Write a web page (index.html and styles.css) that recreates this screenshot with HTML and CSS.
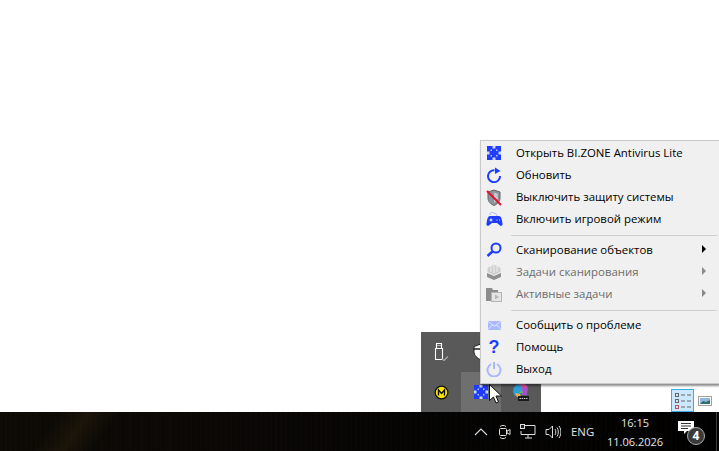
FILE: index.html
```html
<!DOCTYPE html>
<html lang="ru">
<head>
<meta charset="utf-8">
<title>BI.ZONE Antivirus Lite</title>
<link rel="stylesheet" href="styles.css">
</head>
<body>
<main class="desktop">
  <div class="view-buttons">
    <span class="view-btn selected">
      <svg width="18" height="18" viewBox="0 0 18 18"><g fill="none" stroke="#666"><rect x="1.500" y="1.500" width="3" height="3"/><rect x="1.500" y="7.500" width="3" height="3"/><rect x="1.500" y="13.500" width="3" height="3" stroke="#b55"/><path d="M7 3h4M13 3h4M7 9h4M13 9h4M7 15h4M13 15h4"/></g></svg>
    </span>
    <span class="view-btn plain">
      <svg width="14" height="10" viewBox="0 0 14 10"><rect x=".5" y=".5" width="13" height="9" fill="#fff" stroke="#a0a0a0"/><rect x="2" y="2" width="10" height="6" fill="#8fb8dc"/><path d="M2 8l3-3 3 1 4-2v4z" fill="#2f6f6a"/></svg>
    </span>
  </div>
</main>

<div class="tray">
  <span class="tray-cell">
    <svg width="18" height="20" viewBox="0 0 18 20"><path d="M3.500 6.500h7v11h-7zM4.500 6V1.500h5V6" fill="none" stroke="#fff" stroke-width="1.100"/><path d="M5.500 3.500h1M7.500 3.500h1" stroke="#fff"/><path d="M10 17l2 1.500 4-4" fill="none" stroke="#aaa" stroke-width="1.300"/></svg>
  </span>
  <span class="tray-cell">
    <svg width="18" height="20" viewBox="0 0 18 20"><path d="M9 2l7 2.500v5c0 4-3 6.500-7 8.500-4-2-7-4.500-7-8.500v-5z" fill="#fff" stroke="#222"/><path d="M2 7h14" stroke="#222" stroke-width="1.500"/></svg>
  </span>
  <span class="tray-cell"></span>
  <span class="tray-cell">
    <svg width="15" height="15" viewBox="0 0 15 15"><circle cx="7.500" cy="7.500" r="6.300" fill="#ffe600" stroke="#111" stroke-width="1.300"/><path d="M4.500 10.500V5l3 3.500 3-3.500v5.500" fill="none" stroke="#111" stroke-width="1.400"/></svg>
  </span>
  <span class="tray-cell hover">
    <svg class="bz" width="14" height="14" viewBox="0 0 14 14"><use href="#bizone"/></svg>
  </span>
  <span class="tray-cell">
    <svg width="20" height="20" viewBox="0 0 20 20"><path d="M2 10C2 5 5 2 9 2l3 3-3 9H4z" fill="#2a9fd8"/><path d="M9 2h5l3 3-6 4z" fill="#d955a8"/><path d="M12 5l5 1-1 7H10z" fill="#a44fd0"/><path d="M4 11l5 1 1 3H6z" fill="#f2b233"/><path d="M8 11l3-3 1 3z" fill="#69c04b"/><rect x="7" y="14" width="11" height="5" fill="#1a1a1a"/><path d="M8.500 16.500h8" stroke="#ccc" stroke-dasharray="1.500 .7"/></svg>
  </span>
  <svg class="cursor" width="13" height="20" viewBox="0 0 13 20"><path d="M.5.500v16l4-3.500 2.500 6 2.500-1-2.500-6h5.500z" fill="#fff" stroke="#111"/></svg>
</div>

<nav class="menu">
  <svg class="defs" width="0" height="0"><defs>
    <symbol id="bizone" viewBox="0 0 14 14">
      <rect width="14" height="14" fill="#1f3dff"/>
      <path fill="#f0f0f0" opacity=".85" d="M5.500 0h3v2.500h-3zM5.500 11.500h3V14h-3zM0 5.500h2.500v3H0zM11.500 5.500H14v3h-2.500z"/>
      <path fill="#b9c4ff" d="M3.500 3.500h1.500v1.500H3.500zM9 3.500h1.500v1.500H9zM3.500 9h1.500v1.500H3.500zM9 9h1.500v1.500H9z"/>
    </symbol>
  </defs></svg>
  <ul class="group">
    <li class="item"><span class="ico"><svg width="14" height="14" viewBox="0 0 14 14"><use href="#bizone"/></svg></span><span class="lbl">Открыть BI.ZONE Antivirus Lite</span></li>
    <li class="item"><span class="ico"><svg width="17" height="16" viewBox="0 0 17 16"><path d="M8.500 3.200A6 6 0 1 0 14 9" fill="none" stroke="#1f3dff" stroke-width="2"/><path d="M9 .5l5.500 3.500L9 7z" fill="#1f3dff"/></svg></span><span class="lbl">Обновить</span></li>
    <li class="item"><span class="ico"><svg width="16" height="17" viewBox="0 0 16 17"><path d="M8 1l6 2v6c0 3.500-2.500 6-6 7.500C4.500 15 2 12.500 2 9V3z" fill="#8c949c" stroke="#666"/><path d="M8 3.500l3.800 1.300v4c0 2.200-1.500 3.800-3.800 5z" fill="#c5c9cd"/><path d="M1 2l14 14" stroke="#e8102a" stroke-width="2"/></svg></span><span class="lbl">Выключить защиту системы</span></li>
    <li class="item"><span class="ico"><svg width="17" height="16" viewBox="0 0 17 16"><path d="M4 4C4 1 6 1 8 2s3 1 3 3" fill="none" stroke="#a9b4ff"/><path d="M4 5h9c2 0 3 3 3.500 8 .2 2-2 2.500-3 1L11 12H6l-2.500 2c-1 1.500-3.200 1-3-1C1 8 2 5 4 5z" fill="#1f3dff"/><path d="M3.500 9h3M5 7.500v3M10.500 9h.8M13 9h.8" stroke="#fff"/></svg></span><span class="lbl">Включить игровой режим</span></li>
  </ul>
  <div class="sep"></div>
  <ul class="group">
    <li class="item"><span class="ico"><svg width="16" height="16" viewBox="0 0 16 16"><circle cx="10" cy="6" r="4.500" fill="none" stroke="#1f3dff" stroke-width="2"/><path d="M6.500 9.500L1.500 14" stroke="#1f3dff" stroke-width="2.500"/></svg></span><span class="lbl">Сканирование объектов</span><span class="arrow"></span></li>
    <li class="item off"><span class="ico"><svg width="16" height="16" viewBox="0 0 16 16"><path d="M1 9l7 3 7-3v4l-7 3-7-3z" fill="#8f8f8f"/><path d="M1.500 8V4L5 2l3-1.500L11 2l3.500 2v4L8 11z" fill="#cfcfcf"/><path d="M5 2v6M8 1v8M11 2v6" stroke="#eee"/></svg></span><span class="lbl">Задачи сканирования</span><span class="arrow"></span></li>
    <li class="item off"><span class="ico"><svg width="16" height="15" viewBox="0 0 16 15"><path d="M0 1h6l1 2h5v11H0z" fill="#8c8c8c"/><rect x="5.500" y="5.500" width="10" height="9" fill="#e4e4e4" stroke="#b5b5b5"/><path d="M9 7.500l4 2.500-4 2.500z" fill="#b5b5b5"/></svg></span><span class="lbl">Активные задачи</span><span class="arrow"></span></li>
  </ul>
  <div class="sep"></div>
  <ul class="group">
    <li class="item"><span class="ico"><svg width="13" height="9" viewBox="0 0 13 9"><rect width="13" height="9" fill="#a9b9ff"/><path d="M0 .5L6.500 5 13 .5M0 8.500L4.500 4M13 8.500L8.500 4" fill="none" stroke="#e4e8ff"/></svg></span><span class="lbl">Сообщить о проблеме</span></li>
    <li class="item"><span class="ico"><span class="q">?</span></span><span class="lbl">Помощь</span></li>
    <li class="item"><span class="ico"><svg width="16" height="16" viewBox="0 0 16 16"><path d="M5 3.200a6.500 6.500 0 1 0 6 0" fill="none" stroke="#a9b9ff" stroke-width="2"/><path d="M8 1v7" stroke="#a9b9ff" stroke-width="2"/></svg></span><span class="lbl">Выход</span></li>
  </ul>
</nav>

<footer class="taskbar">
  <div class="tb-tray">
    <svg class="chev" width="14" height="8" viewBox="0 0 14 8"><path d="M1 7l6-6 6 6" fill="none" stroke="#ddd" stroke-width="1.100"/></svg>
    <svg class="cam" width="13" height="16" viewBox="0 0 13 16"><path d="M2 2.500C4 1 6 1 8 2.500M2 13.500c2 1.500 4 1.500 6 0" fill="none" stroke="#ddd"/><rect x="1.500" y="4.500" width="7" height="7" rx="1" fill="none" stroke="#ddd"/><path d="M9 7l3-1.500v5L9 9z" fill="none" stroke="#ddd"/></svg>
    <svg width="16" height="15" viewBox="0 0 16 15"><path d="M4 1.500h11v9H1V7" fill="none" stroke="#ddd"/><rect x=".5" y=".5" width="4" height="4" fill="#222" stroke="#ddd"/><path d="M8 11v3M5 14h7" stroke="#ddd"/></svg>
    <svg width="16" height="14" viewBox="0 0 16 14"><path d="M1 4.500h3L7.500 1v12L4 9.500H1zM10 4c1 1.500 1 4.500 0 6M12 2.500c1.800 2.500 1.800 6.500 0 9M14 1c2.500 3.500 2.500 8.500 0 12" fill="none" stroke="#ddd"/></svg>
  </div>
  <span class="lang">ENG</span>
  <div class="clock"><span>16:15</span><span>11.06.2026</span></div>
  <div class="notify">
    <svg width="17" height="13" viewBox="0 0 17 13"><path d="M0 0h16v10H9l-3 3v-3H0z" fill="#fff"/><path d="M3 2.500h10M3 5h10M3 7.500h7" stroke="#333"/></svg>
    <span class="badge">4</span>
  </div>
  <div class="edge"></div>
</footer>
</body>
</html>
```
FILE: styles.css
```css
* { box-sizing: border-box; }
html, body { margin: 0; height: 451px; overflow: hidden; background: #fff; }
body {
  position: relative;
  width: 719px;
  display: flex;
  flex-direction: column;
  font-family: "Open Sans", "Noto Sans", sans-serif;
}
ul { list-style: none; margin: 0; padding: 0; }

.desktop { flex: 1; display: flex; justify-content: flex-end; align-items: flex-end; padding-right: 7px; }
.view-buttons { display: flex; align-items: center; gap: 3px; }
.view-btn { display: flex; align-items: center; justify-content: center; width: 23px; height: 23px; }
.view-btn.selected { background: #cce8ff; border: 1px solid #3fa9e0; }
.view-btn.plain { width: 15px; }

.tray {
  position: absolute; left: 421px; top: 332px;
  width: 120px; height: 80px;
  background: #595959;
  display: grid; grid-template-columns: repeat(3, 40px); grid-template-rows: repeat(2, 40px);
}
.tray-cell { display: flex; align-items: center; justify-content: center; }
.tray-cell.hover { background: #6f6f6f; }
.cursor { position: absolute; left: 68px; top: 52px; }

.menu {
  position: absolute; left: 480px; top: 140px;
  width: 239px; height: 244px;
  background: #f0f0f0;
  border: 1px solid #c9c9c9;
  border-right: 0;
  box-shadow: 1px 2px 2px rgba(0, 0, 0, .45);
}
.defs { position: absolute; }
.item {
  height: 22px; display: flex; align-items: center;
  font-size: 11.4px; color: #000; white-space: nowrap;
}
.item.off { color: #6d6d6d; }
.ico { width: 35px; flex: none; display: flex; align-items: center; justify-content: center; padding: 2px 9px 0 0; }
.lbl { flex: 1; }
.q { font: bold 18px/20px "Liberation Sans", sans-serif; color: #1f3dff; }
.arrow {
  width: 0; height: 0; margin-right: 13px;
  border-left: 4px solid #000;
  border-top: 4px solid transparent; border-bottom: 4px solid transparent;
}
.off .arrow { border-left-color: #8a8a8a; }
.sep { height: 1px; background: #d0d0d0; margin: 6px 2px 2px 30px; }

.taskbar {
  height: 39px; flex: none;
  background:
    linear-gradient(125deg, transparent 8%, rgba(60, 45, 20, .3) 12%, transparent 16%),
    repeating-linear-gradient(90deg, rgba(40, 30, 15, .08) 0 2px, transparent 2px 5px),
    linear-gradient(90deg, #0d0a05, #0a0805 30%, #050404 60%, #000);
  color: #e6e6e6;
  display: flex; align-items: center; justify-content: flex-end;
  font-size: 11.4px;
}
.tb-tray { display: flex; align-items: center; gap: 9px; }
.chev { margin-right: 1px; }
.lang { margin-left: 10px; width: 34px; }
.clock { display: flex; flex-direction: column; align-items: center; line-height: 19px; width: 60px; font-size: 11px; }
.notify { position: relative; width: 38px; margin-left: 13px; height: 24px; padding-top: 1px; }
.notify svg { display: block; }
.badge {
  position: absolute; left: 9px; top: 7px;
  width: 18px; height: 18px; border-radius: 50%;
  background: #3a3a3a; border: 1px solid #aaa;
  color: #fff; font-size: 12px; font-weight: 700; line-height: 16px; text-align: center;
}
.edge { width: 1px; height: 39px; background: #3c3c3c; margin-right: 2px; }
```
